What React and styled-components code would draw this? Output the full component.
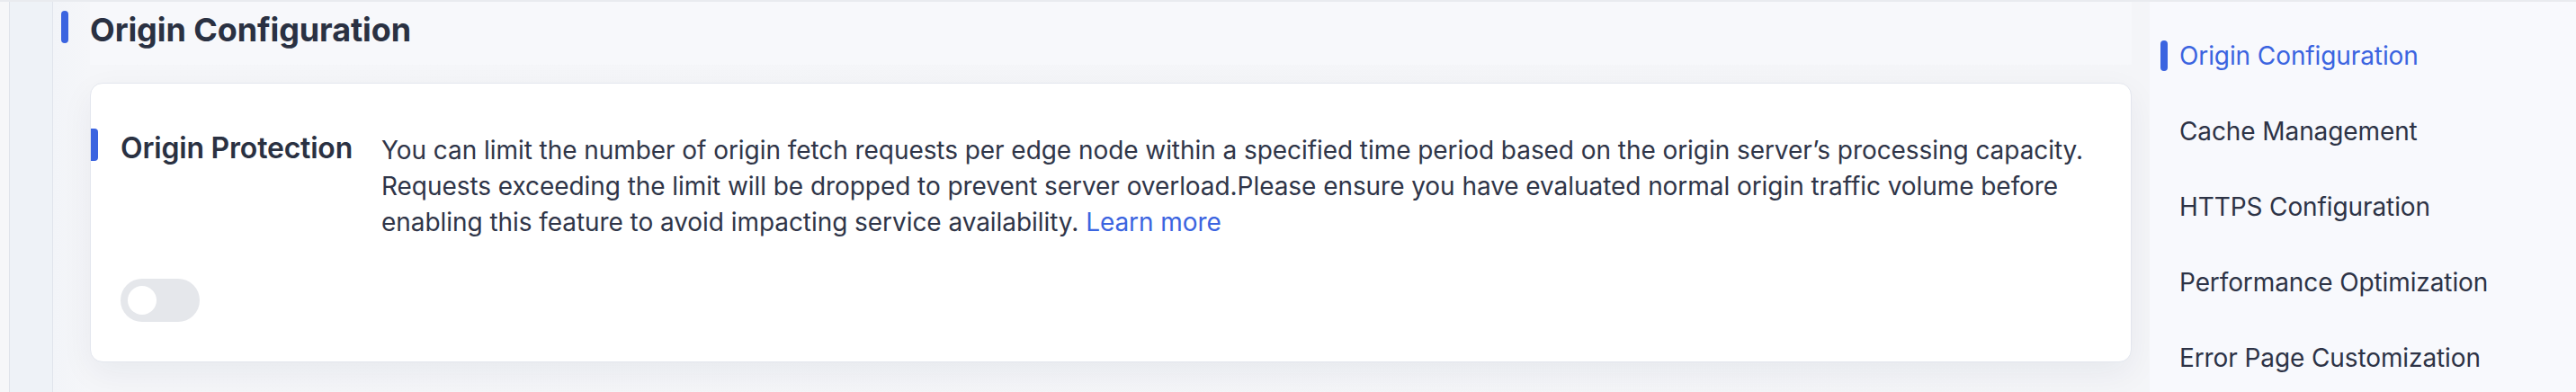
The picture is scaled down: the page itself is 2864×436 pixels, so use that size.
import React from 'react';
import styled, { createGlobalStyle } from 'styled-components';

const GlobalStyle = createGlobalStyle`
  html, body {
    margin: 0;
    padding: 0;
    background: #f8f9fc;
  }
  body {
    font-family: Inter, "Noto Sans", "Liberation Sans", sans-serif;
    color: #2d3346;
    -webkit-font-smoothing: antialiased;
  }
  * { box-sizing: border-box; }
`;

const Page = styled.div`
  display: flex;
  height: 436px;
  border-top: 2px solid #e9ebef;
  overflow: hidden;
`;

const EdgeRail = styled.div`
  width: 11px;
  flex: 0 0 11px;
  background: #f6f7f9;
  border-right: 1px solid #dfe3ea;
`;

const NavRail = styled.div`
  width: 48px;
  flex: 0 0 48px;
  background: #eef2f7;
  border-right: 1px solid #e0e4eb;
`;

const Main = styled.main`
  flex: 0 0 2331px;
  padding: 0 20px 0 9px;
  display: flex;
  flex-direction: column;
  background: linear-gradient(90deg, #f2f4f8 0px, #f5f6f9 40px, #f4f5f8 100%);
`;

const TitleRow = styled.div`
  display: flex;
  align-items: flex-start;
  gap: 24px;
`;

const AccentBar = styled.span`
  display: block;
  flex: 0 0 8px;
  width: 8px;
  height: ${p => p.$h || 36}px;
  margin-top: ${p => p.$top || 0}px;
  background: #3b64e0;
  border-radius: ${p => (p.$flush ? '0 4px 4px 0' : '4px')};
`;

const TitleBox = styled.h1`
  flex: 1;
  margin: 0;
  height: 70px;
  padding-top: 9px;
  background: #f7f8fb;
  font-size: 36px;
  line-height: 44px;
  font-weight: 700;
  color: #2a3142;
  letter-spacing: -0.1px;
`;

const Card = styled.section`
  margin: 20px 0 0 32px;
  background: #fff;
  border: 1px solid #e3e6ee;
  border-radius: 14px;
  padding: 52px 32px 44px 0;
  box-shadow: 0 12px 36px rgba(25, 35, 70, 0.06);
`;

const CardRow = styled.div`
  display: flex;
  align-items: flex-start;
`;

const Heading = styled.h2`
  margin: 0 32px 0 25px;
  font-size: 32px;
  line-height: 40px;
  font-weight: 600;
  color: #2a3142;
  white-space: nowrap;
  letter-spacing: -0.2px;
`;

const Description = styled.p`
  flex: 1;
  margin: 2px 0 0;
  font-size: 28px;
  line-height: 40px;
  color: #2f3548;
  letter-spacing: -0.06px;
`;

const Link = styled.a`
  color: #3b64e0;
  text-decoration: none;
`;

const Toggle = styled.button`
  display: flex;
  align-items: center;
  width: 88px;
  height: 48px;
  margin: 43px 0 0 33px;
  padding: 0 8px;
  border: none;
  border-radius: 24px;
  background: #e5e7eb;
  cursor: pointer;

  &::after {
    content: '';
    width: 32px;
    height: 32px;
    border-radius: 50%;
    background: #fff;
  }
`;

const Sidebar = styled.aside`
  flex: 1;
  background: #f8f9fd;
  padding: 40px 0 0 12px;
  display: flex;
  flex-direction: column;
  gap: 44px;
`;

const NavItem = styled.div`
  display: flex;
  align-items: center;
  gap: 13px;
  height: 40px;
  font-size: 28px;
  line-height: 40px;
  letter-spacing: -0.1px;
  color: ${p => (p.$active ? '#3b64e0' : '#2d3346')};
  white-space: nowrap;
`;

const NavMark = styled.span`
  width: 8px;
  height: 34px;
  border-radius: 4px;
  background: ${p => (p.$active ? '#3b64e0' : 'transparent')};
`;

const sections = [
  'Origin Configuration',
  'Cache Management',
  'HTTPS Configuration',
  'Performance Optimization',
  'Error Page Customization',
];

export default function App() {
  return (
    <>
      <GlobalStyle />
      <Page>
        <EdgeRail />
        <NavRail />
        <Main>
          <TitleRow>
            <AccentBar $top={10} />
            <TitleBox>Origin Configuration</TitleBox>
          </TitleRow>
          <Card>
            <CardRow>
              <AccentBar $flush $top={-2} />
              <Heading>Origin Protection</Heading>
              <Description>
                You can limit the number of origin fetch requests per edge node within a specified time period based on the origin server’s processing capacity. Requests exceeding the limit will be dropped to prevent server overload.Please ensure you have evaluated normal origin traffic volume before enabling this feature to avoid impacting service availability.{' '}
                <Link href="#">Learn more</Link>
              </Description>
            </CardRow>
            <Toggle aria-label="Origin Protection" />
          </Card>
        </Main>
        <Sidebar>
          {sections.map((s, i) => (
            <NavItem key={s} $active={i === 0}>
              <NavMark $active={i === 0} />
              {s}
            </NavItem>
          ))}
        </Sidebar>
      </Page>
    </>
  );
}
